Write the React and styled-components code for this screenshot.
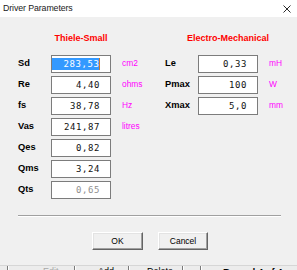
import React from "react";
import styled, { createGlobalStyle } from "styled-components";

const Global = createGlobalStyle`
  html, body { margin: 0; padding: 0; background: #f0f0f0; overflow: hidden; }
  #root { width: 297px; height: 270px; }
`;

const Window = styled.div`
  width: 297px;
  height: 270px;
  overflow: hidden;
  display: flex;
  flex-direction: column;
  background: #f0f0f0;
  font-family: "Liberation Sans", Arial, sans-serif;
`;

const TitleBar = styled.div`
  height: 17px;
  flex: none;
  background: #ffffff;
  display: flex;
  align-items: center;
  justify-content: space-between;
  padding: 0 6px 0 3px;
  box-sizing: border-box;
`;

const Title = styled.span`
  font-size: 8.8px;
  color: #1a1a1a;
  letter-spacing: -0.1px;
  margin-top: -2px;
`;

const Body = styled.div`
  height: 249px;
  flex: none;
  box-sizing: border-box;
  padding: 15px 0 0 18px;
  display: flex;
  flex-direction: column;
  border-bottom: 1px solid #d6d6d6;
`;

const Columns = styled.div`
  display: flex;
`;

const Column = styled.div`
  width: ${(p) => p.$width}px;
  display: grid;
  grid-template-columns: 33px 60px auto;
  grid-template-rows: 20px;
  grid-auto-rows: 18px;
  row-gap: 3px;
  align-content: start;
`;

const Header = styled.div`
  grid-column: 2;
  justify-self: center;
  align-self: start;
  white-space: nowrap;
  color: #ff0000;
  font-weight: bold;
  font-size: 9px;
  line-height: 12px;
`;

const Label = styled.div`
  grid-column: 1;
  align-self: center;
  font-weight: bold;
  font-size: 9.3px;
  color: #000;
  margin-top: -2px;
`;

const Field = styled.div`
  grid-column: 2;
  box-sizing: border-box;
  height: 18px;
  border: 1px solid #7c7c7c;
  background: #ffffff;
  display: flex;
  align-items: center;
  justify-content: flex-end;
  padding: 0 10px 0 0;
  font-family: "DejaVu Sans Mono", "Liberation Mono", monospace;
  font-size: 9px;
  letter-spacing: 0.6px;
  color: ${(p) => (p.$disabled ? "#8f8f8f" : "#111")};
`;

const Selected = styled.span`
  flex: 1;
  text-align: right;
  background: #3399ff;
  color: #ffffff;
  height: 12px;
  line-height: 12px;
  margin-right: -0.6px;
`;

const Caret = styled.span`
  width: 1px;
  height: 12px;
  background: #c8782f;
  flex: none;
`;

const Unit = styled.div`
  grid-column: 3;
  align-self: center;
  padding-left: 11px;
  font-size: 8.4px;
  color: #ff00ff;
  margin-top: -3px;
`;

const Separator = styled.div`
  width: 263px;
  height: 1px;
  background: #a0a0a0;
  margin-top: 16px;
  box-shadow: 0 1px 0 #ffffff;
`;

const Buttons = styled.div`
  display: flex;
  gap: 15px;
  margin-top: 16px;
  padding-left: 74px;
`;

const Button = styled.button`
  width: ${(p) => p.$width}px;
  height: 18px;
  box-sizing: border-box;
  padding: 0;
  background: #f0f0f0;
  border: 1px solid;
  border-color: #ffffff #646464 #646464 #ffffff;
  box-shadow: inset -1px -1px 0 #a0a0a0, inset 1px 1px 0 #e3e3e3;
  font-family: "Liberation Sans", Arial, sans-serif;
  font-size: 8.5px;
  color: #000;
`;

const ParentBar = styled.div`
  flex: none;
  height: 20px;
  background: #ececec;
  display: flex;
`;

const Cell = styled.div`
  width: ${(p) => p.$width}px;
  flex: none;
  box-sizing: border-box;
  border-left: ${(p) => (p.$first ? "none" : "1px solid #7a7a7a")};
  box-shadow: ${(p) => (p.$first ? "none" : "inset 1px 0 0 #ffffff")};
  padding-left: ${(p) => p.$pad || 0}px;
  font-size: ${(p) => (p.$bold ? 9.4 : 9)}px;
  font-weight: ${(p) => (p.$bold ? "bold" : "normal")};
  color: ${(p) => (p.$muted ? "#a8a8a8" : "#000")};
  line-height: 11px;
  white-space: nowrap;
`;

const CloseIcon = () => (
  <svg width="8" height="8" viewBox="0 0 8 8">
    <path d="M0.5 0.5 L7.5 7.5 M7.5 0.5 L0.5 7.5" stroke="#2b2b2b" strokeWidth="1" fill="none" />
  </svg>
);

const left = [
  { label: "Sd", value: "283,53", unit: "cm2", selected: true },
  { label: "Re", value: "4,40", unit: "ohms" },
  { label: "fs", value: "38,78", unit: "Hz" },
  { label: "Vas", value: "241,87", unit: "litres" },
  { label: "Qes", value: "0,82" },
  { label: "Qms", value: "3,24" },
  { label: "Qts", value: "0,65", disabled: true },
];

const right = [
  { label: "Le", value: "0,33", unit: "mH" },
  { label: "Pmax", value: "100", unit: "W" },
  { label: "Xmax", value: "5,0", unit: "mm" },
];

const Rows = ({ rows }) =>
  rows.map((r) => (
    <React.Fragment key={r.label}>
      <Label>{r.label}</Label>
      <Field $disabled={r.disabled}>
        {r.selected ? (
          <>
            <Selected>{r.value}</Selected>
            <Caret />
          </>
        ) : (
          r.value
        )}
      </Field>
      <Unit>{r.unit || ""}</Unit>
    </React.Fragment>
  ));

export default function App() {
  return (
    <>
      <Global />
      <Window>
        <TitleBar>
          <Title>Driver Parameters</Title>
          <CloseIcon />
        </TitleBar>
        <Body>
          <Columns>
            <Column $width={147}>
              <Header>Thiele-Small</Header>
              <div />
              <Rows rows={left} />
            </Column>
            <Column $width={130}>
              <Header>Electro-Mechanical</Header>
              <div />
              <Rows rows={right} />
            </Column>
          </Columns>
          <Separator />
          <Buttons>
            <Button $width={51}>OK</Button>
            <Button $width={50}>Cancel</Button>
          </Buttons>
        </Body>
        <ParentBar>
          <Cell $first $width={7} />
          <Cell $width={67} $pad={35} $muted>Edit</Cell>
          <Cell $width={54} $pad={23}>Add</Cell>
          <Cell $width={54} $pad={18}>Delete</Cell>
          <Cell $width={18} />
          <Cell $width={97} $pad={22} $bold>Record 4 of 4</Cell>
        </ParentBar>
      </Window>
    </>
  );
}
